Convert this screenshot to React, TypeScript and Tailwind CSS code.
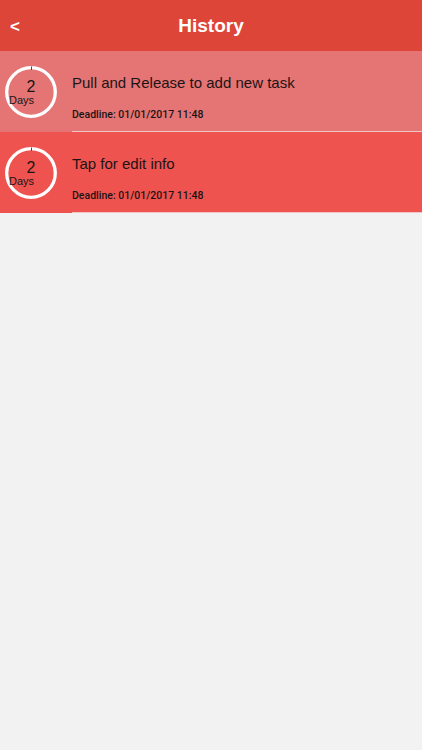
const TASKS = [
  { title: "Pull and Release to add new task", deadline: "01/01/2017 11:48", bg: "bg-[#e57574]", days: 2 },
  { title: "Tap for edit info", deadline: "01/01/2017 11:48", bg: "bg-[#ef5350]", days: 2 },
];

function DaysRing({ days }: { days: number }) {
  return (
    <div className="relative size-[52px]">
      <svg viewBox="0 0 52 52" className="absolute inset-0 size-[52px]">
        <circle cx="26" cy="26" r="24.3" fill="none" stroke="#ffffff" strokeWidth="3.3" />
        <line x1="26.5" y1="0.5" x2="26.5" y2="4" stroke="#5a3a3a" strokeWidth="1" />
      </svg>
      <div className="absolute inset-0 flex flex-col">
        <span className="mt-[13px] text-center text-[16px] leading-[16px] text-[#1c1414]">{days}</span>
        <span className="ml-[4px] mt-[-1px] text-[11px] leading-[12px] text-[#1c1414]">Days</span>
      </div>
    </div>
  );
}

export default function App() {
  return (
    <div className="h-[750px] w-[422px] overflow-hidden bg-[#f2f2f2] font-['Liberation_Sans',Arial,sans-serif]">
      <header className="grid h-[51px] grid-cols-[40px_1fr_40px] items-center bg-[#de4539] text-white">
        <span className="pl-[10px] pt-[3px] text-[17px] font-bold">&lt;</span>
        <h1 className="pt-[1px] text-center text-[19px] font-bold">History</h1>
        <span />
      </header>

      {TASKS.map((task) => (
        <div key={task.title} className={`flex h-[81px] ${task.bg}`}>
          <div className="flex w-[72px] shrink-0 items-center pl-[5px]">
            <DaysRing days={task.days} />
          </div>
          <div className="flex flex-1 flex-col border-b border-[#f2c6c4] text-[#1c1414]">
            <p className="mt-[23px] text-[15px] leading-[18px]">{task.title}</p>
            <p className="mt-[16px] font-['Roboto',sans-serif] text-[10.5px] font-medium leading-[14px]">
              Deadline: {task.deadline}
            </p>
          </div>
        </div>
      ))}
    </div>
  );
}
